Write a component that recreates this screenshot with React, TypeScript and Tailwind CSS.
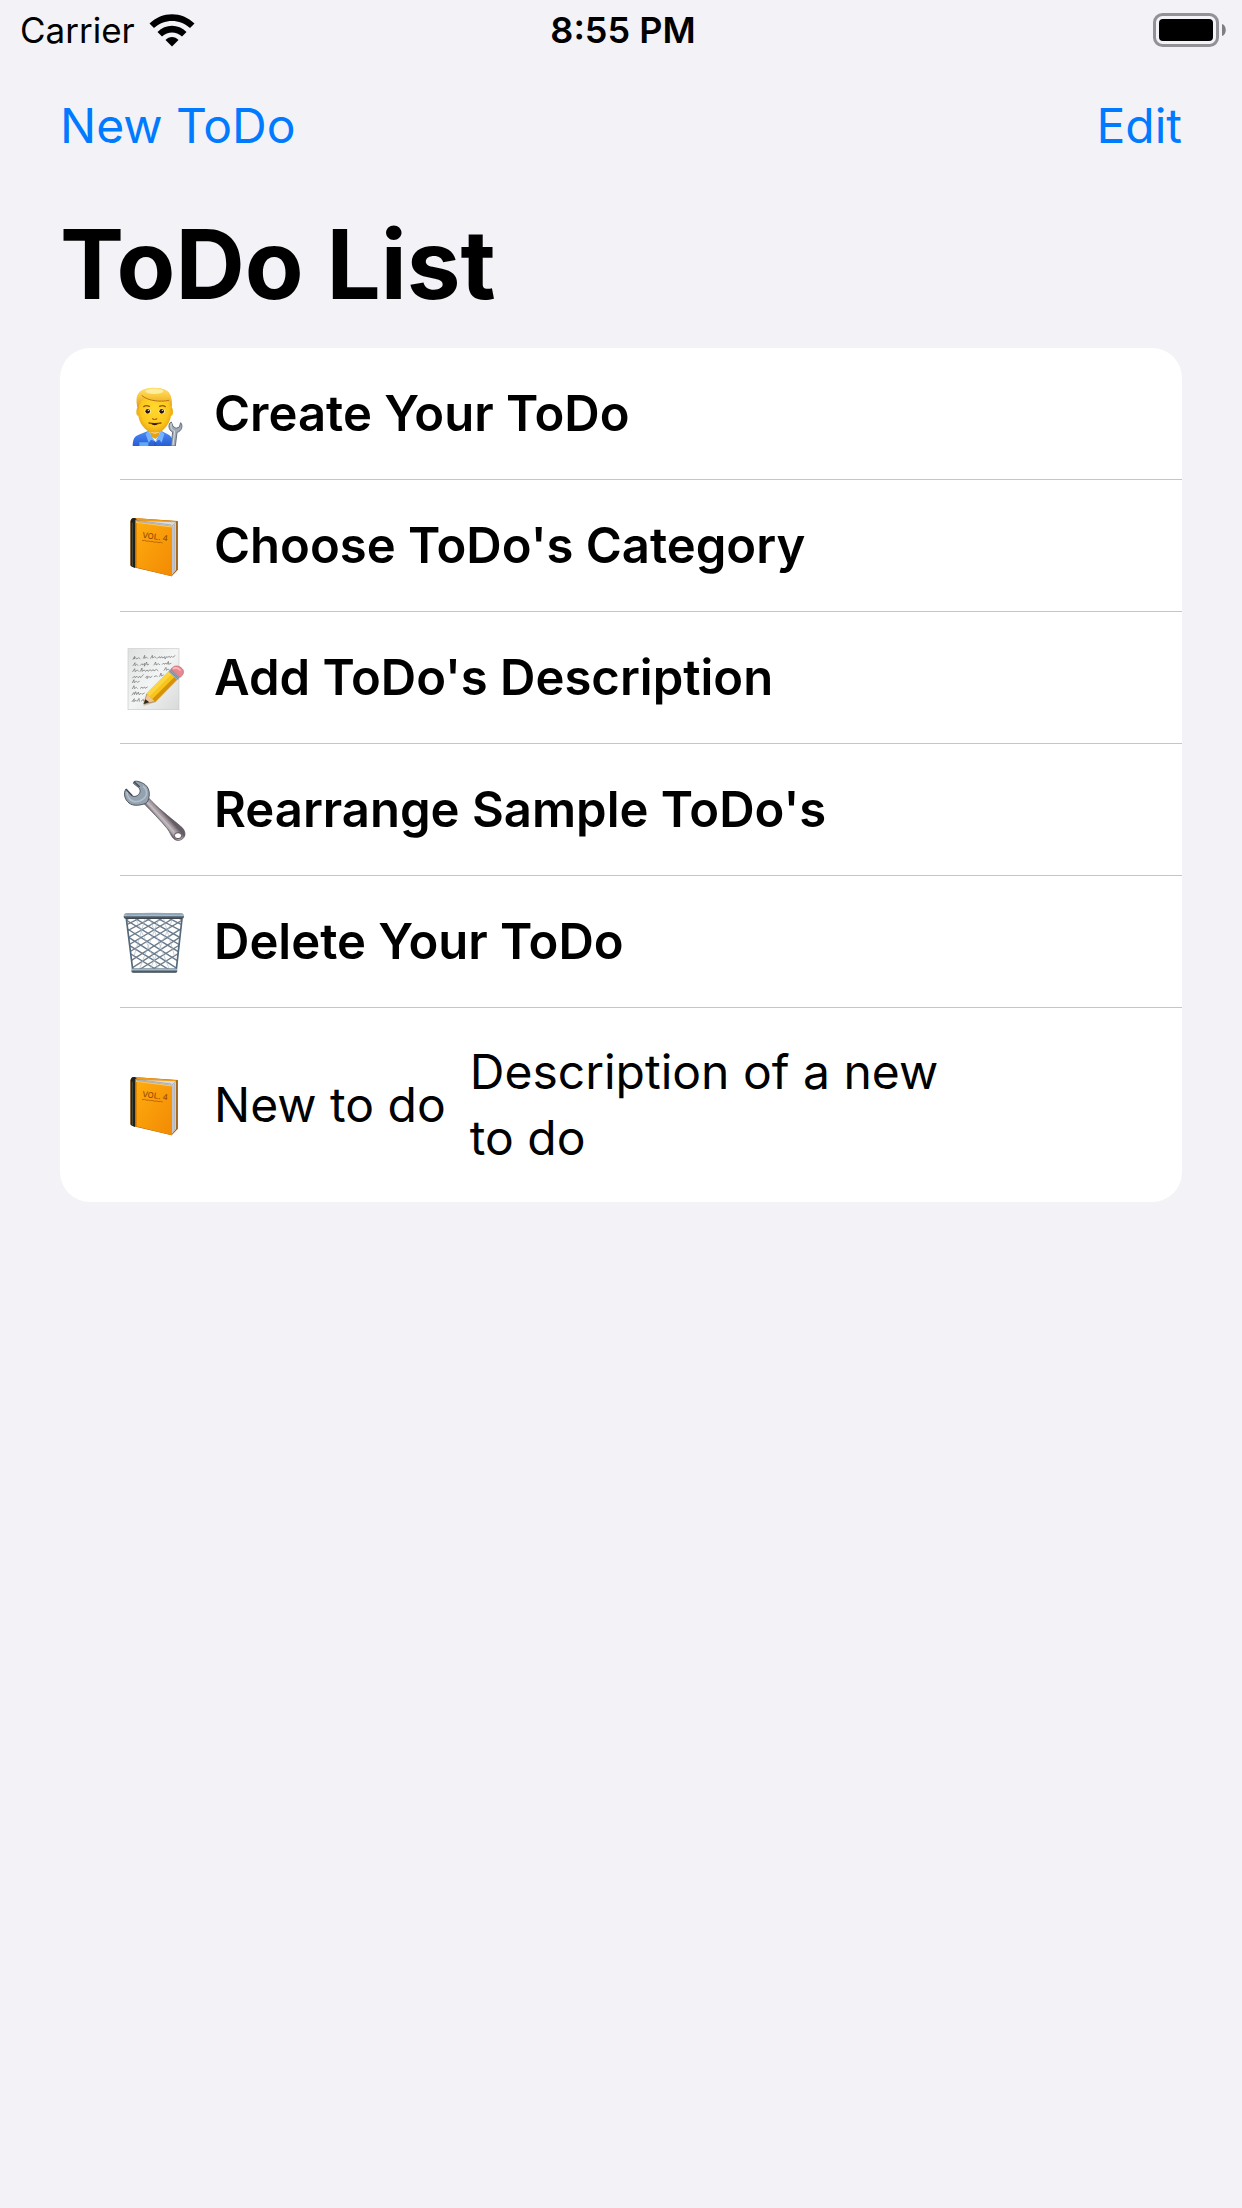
import type { ReactNode } from 'react';

function Mechanic() {
  return (
    <svg viewBox="30 27 210 210" className="size-[70px] shrink-0" role="img" aria-label="Mechanic">
      <defs>
        <linearGradient id="hair" x1="0" y1="0" x2="0" y2="1">
          <stop offset="0" stopColor="#ffdf6e" />
          <stop offset="0.4" stopColor="#f9c83c" />
          <stop offset="1" stopColor="#d98f14" />
        </linearGradient>
        <radialGradient id="face" cx="0.5" cy="0.45" r="0.6">
          <stop offset="0" stopColor="#ffd92e" />
          <stop offset="0.7" stopColor="#fcc71c" />
          <stop offset="1" stopColor="#e49b12" />
        </radialGradient>
        <linearGradient id="shirt" x1="0" y1="0" x2="0" y2="1">
          <stop offset="0" stopColor="#4b8cf5" />
          <stop offset="1" stopColor="#2558cf" />
        </linearGradient>
        <clipPath id="bust">
          <rect x="50" y="40" width="180" height="188" />
        </clipPath>
      </defs>
      <g clipPath="url(#bust)">
        <path d="M68 232c0-22 4-33 18-38l26-10h44l20 10c10 6 14 16 14 38z" fill="url(#shirt)" />
        <path d="M117 184h35l-3 18-12 15-15-15z" fill="#fff" />
        <path d="M119 184c8 9 23 9 31 0l-2 14-12 9-14-9z" fill="#e7a214" />
        <path d="M115 183l20 30-12-4-7 9-9-26z" fill="#75b2ff" />
        <path d="M154 183l-18 30 12-4 7 9 8-26z" fill="#75b2ff" />
        <path d="M135 214v14" stroke="#1b459f" strokeWidth="2" />
        <path d="M88 217h27v11H88z" fill="#5fa8fa" />
        <ellipse cx="84" cy="125" rx="5" ry="12" fill="#eeb01b" />
        <ellipse cx="184" cy="125" rx="5" ry="12" fill="#eeb01b" />
        <path d="M84 92c0-27 18-38 50-38s50 12 50 38v34c0 18-7 37-21 50-8 9-17 12-29 12s-21-4-29-12c-14-14-21-32-21-50z" fill="url(#face)" />
        <path d="M84 120c-8-31-5-48 9-58 17-12 57-12 76 0 17 12 19 31 15 58-1-13-3-25-9-29-25 4-52 2-69-13-3 13-15 15-18 25z" fill="url(#hair)" />
        <path d="M95 76c17 16 54 21 82 15" fill="none" stroke="#b9741a" strokeWidth="3" />
        <ellipse cx="133" cy="64" rx="27" ry="8" fill="#fff5b5" opacity="0.75" />
        <path d="M101 110c5-4 11-4 17-1M149 109c6-3 12-3 17 1" fill="none" stroke="#925410" strokeWidth="4" strokeLinecap="round" />
        <ellipse cx="113" cy="124" rx="9" ry="8" fill="#fff" />
        <ellipse cx="155" cy="124" rx="9" ry="8" fill="#fff" />
        <circle cx="113" cy="124" r="7" fill="#2d1808" />
        <circle cx="155" cy="124" r="7" fill="#2d1808" />
        <circle cx="115" cy="121" r="2" fill="#fff" />
        <circle cx="157" cy="121" r="2" fill="#fff" />
        <path d="M128 146c3 3 9 3 12 0" fill="none" stroke="#b76c09" strokeWidth="4" strokeLinecap="round" />
        <path d="M117 159c8 2 27 2 36 0" fill="none" stroke="#8f4d08" strokeWidth="4" strokeLinecap="round" />
        <path d="M124 160h20c-2 8-18 8-20 0z" fill="#3d1403" />
        <path d="M184 156c-11 5-9 25 4 30l-5 42h13l5-41c14-3 19-20 11-29l-4 13-10 4-9-6z" fill="#a1aab4" stroke="#65717d" strokeWidth="3" />
        <path d="M184 160c-3 13 0 20 10 23l-5 43" fill="none" stroke="#d8dee4" strokeWidth="3" />
      </g>
    </svg>
  );
}

function Book() {
  return (
    <svg viewBox="30 33 210 210" className="size-[70px] shrink-0" role="img" aria-label="Orange book">
      <defs>
        <linearGradient id="cover" x1="0" y1="0" x2="1" y2="1">
          <stop offset="0" stopColor="#ffac0e" />
          <stop offset="1" stopColor="#f28a04" />
        </linearGradient>
      </defs>
      <path d="M68 54l135 9v147l-18 19-118-28-6-6V63z" fill="#a85a05" />
      <path d="M72 54l130 10-14 11-118-15z" fill="#f49a10" />
      <path d="M77 62l121 5-14 15-106-17z" fill="#d9dde0" />
      <path d="M80 64l104 15 14-10M78 61l106 14" fill="none" stroke="#8f959b" strokeWidth="2" />
      <path d="M185 80l14-13v142l-14 17z" fill="#d2d5dc" />
      <path d="M189 80v140M194 74v139" stroke="#9da1aa" strokeWidth="2" />
      <path d="M201 64v146" stroke="#9b5c0d" strokeWidth="4" />
      <path d="M77 66l109 14v149L77 202z" fill="url(#cover)" />
      <path d="M78 67l107 14" stroke="#ffc65a" strokeWidth="3" />
      <path d="M62 64c0-8 5-11 13-10l7 5c-7-2-8 3-7 10v135l-13-6z" fill="#1d211c" />
      <path d="M67 68v130" stroke="#4a5146" strokeWidth="3" />
      <path d="M78 69v132" stroke="#c27105" strokeWidth="3" />
      <text x="96" y="113" fontSize="24" fontWeight="500" fontFamily="Inter, sans-serif" fill="#9a4d05" transform="rotate(8 96 113)">VOL. 4</text>
      <path d="M96 121l6 1 2-1 7 3 4-1 7 2 4-1 8 3 5-1 8 2 4-1 7 2" fill="none" stroke="#bd6a08" strokeWidth="3" />
    </svg>
  );
}

function Memo() {
  return (
    <svg viewBox="30 39 210 210" className="size-[70px] shrink-0" role="img" aria-label="Memo">
      <defs>
        <linearGradient id="paper" x1="0" y1="0" x2="1" y2="1">
          <stop offset="0" stopColor="#dfe1e1" />
          <stop offset="0.5" stopColor="#f3f4f4" />
          <stop offset="1" stopColor="#d8dada" />
        </linearGradient>
      </defs>
      <rect x="54" y="56" width="153" height="183" fill="url(#paper)" stroke="#c9cbca" strokeWidth="2" />
      <g fill="none" stroke="#6b6e6f" strokeWidth="2" strokeLinecap="round" strokeLinejoin="round">
        <path d="M69 88l5-9-2 8 5-4 3 4 6-4 4 3M100 85l4-9v9l5-4 4 4M122 85l5-9 1 8 6-4 5 4M143 84l6-4 1 4 6-4 2 4 7-4 0 7 6-8M173 82l5-3 2 4 5-4 3 3 7-5" />
        <path d="M69 107l6-9 0 9 5-4 4 3M91 106l5-5 2 4 6-5-1 9 7-13 1 9 5-2M132 105l5-9 1 9 7-4 4 3M157 103l4-4 2 4 5-4 3 4 4-9 1 9 7-3" />
        <path d="M68 125l6-9 1 9 7-5 4 4M91 124l5-10 0 10 7-4 3 4 6-4 2 4 7-5 3 4 6-4 2 4 7-5 5 4M162 121l6-9 1 9 5-4 4 3" />
        <path d="M68 143l6-4 1 4 6-4 3 4 6-4 2 4 8-9M107 142l5-4-1 8 6-7 3 4 6-4M133 140l6-3 3 3M149 139l4-10 1 9 6-3" />
        <path d="M67 158l5-9 0 9 7-4 3 3 6-3" />
        <path d="M67 176l5-9 1 9 6-4 3 3M91 175l5-4 2 4 6-4 2 4 6-4" />
        <path d="M66 195l6-8 1 7 4-9 3 9 5-8 2 8 6-4 3 3 7-4" />
        <path d="M66 215l7-9-2 9 7-4 3 3 6-9 1 9M94 213l6-5 1 5" />
      </g>
      <path d="M100 228l11-35 72-73 24 25-70 72z" fill="#80602e" opacity="0.3" />
      <path d="M101 222l10-32 25 24z" fill="#edc693" stroke="#aa7b42" strokeWidth="2" />
      <path d="M101 222l5-14 12 9z" fill="#2d2824" />
      <path d="M110 190l66-66 26 24-66 67-9-8-8-8z" fill="#f7c51d" />
      <path d="M110 190l66-66 9 8-66 67z" fill="#fcd640" />
      <path d="M127 207l67-67 8 8-66 67z" fill="#d99109" />
      <path d="M175 125l8-8 27 25-8 8z" fill="#9faebe" />
      <path d="M178 122l27 25M181 119l26 25" stroke="#667484" strokeWidth="2" />
      <path d="M183 117l7-6c9-7 23-1 29 8 4 8 1 14-8 23z" fill="#e8878d" stroke="#bd646d" strokeWidth="2" />
      <path d="M190 116c7-5 15-1 20 4" fill="none" stroke="#ffb9bd" strokeWidth="5" strokeLinecap="round" />
    </svg>
  );
}

function Wrench() {
  return (
    <svg viewBox="30 30 210 210" className="size-[70px] shrink-0" role="img" aria-label="Wrench">
      <defs>
        <linearGradient id="steel" gradientUnits="userSpaceOnUse" x1="150" y1="128" x2="128" y2="147">
          <stop offset="0" stopColor="#655d66" />
          <stop offset="0.35" stopColor="#a69ba1" />
          <stop offset="0.7" stopColor="#b6afb5" />
          <stop offset="1" stopColor="#625b63" />
        </linearGradient>
      </defs>
      <path d="M103 117L117 100c24 27 59 54 94 83 9 7 15 16 14 26-2 13-18 22-30 15-12-7-13-21-24-34-21-26-46-50-68-73z" fill="url(#steel)" stroke="#554f57" strokeWidth="2" />
      <path d="M112 111c27 31 59 61 81 91" fill="none" stroke="#d4c9cb" strokeWidth="4" opacity="0.6" />
      <path d="M48 72c-9 12-4 32 9 42 12 9 28 8 45 3 8-2 13-8 14-17 5-18 0-35-15-44-9-5-20-9-28-7l-3 6 15 12c7 6 7 15 1 21-6 7-15 9-23 2z" fill="#94a2b0" stroke="#4d5762" strokeWidth="3" strokeLinejoin="round" />
      <path d="M51 80c0 13 7 26 19 29 13 4 31-4 37-15 5-10 2-23-8-31" fill="none" stroke="#b3bfc9" strokeWidth="5" />
      <path d="M48 72l19 20M72 50l17 15" stroke="#424a52" strokeWidth="4" />
      <ellipse cx="204" cy="212" rx="11" ry="9" fill="#fff" stroke="#5b4e54" strokeWidth="3" />
    </svg>
  );
}

function Wastebasket() {
  return (
    <svg viewBox="30 36 210 210" className="size-[70px] shrink-0" role="img" aria-label="Wastebasket">
      <defs>
        <clipPath id="basket">
          <path d="M49 68h167l-17 158H67z" />
        </clipPath>
        <linearGradient id="rim" x1="0" y1="0" x2="0" y2="1">
          <stop offset="0" stopColor="#6f8496" />
          <stop offset="0.35" stopColor="#b2c7d7" />
          <stop offset="0.6" stopColor="#596671" />
          <stop offset="1" stopColor="#36404a" />
        </linearGradient>
      </defs>
      <g clipPath="url(#basket)" fill="none">
        <path d="M20 58l205 124M20 81l190 121M20 104l190 122M20 128l180 110M20 151l150 92M48 54l175 104M80 54l145 82M112 54l110 58M144 54l90 44M176 54l60 30" stroke="#657b90" strokeWidth="4" />
        <path d="M245 58L40 182M245 81L55 202M245 104L55 226M245 128L65 238M245 151L95 243M217 54L42 158M185 54L40 136M153 54L43 112M121 54L31 98M89 54L29 84" stroke="#747d85" strokeWidth="4" />
        <path d="M76 68l70 155M118 68l60 155M160 68l35 120M190 68l-70 155M148 68L88 223M106 68L73 180" stroke="#a9bac8" strokeWidth="2" />
      </g>
      <path d="M49 71l19 152M216 71l-17 152" stroke="#54697c" strokeWidth="5" />
      <rect x="64" y="220" width="138" height="13" rx="5" fill="url(#rim)" />
      <rect x="41" y="55" width="181" height="17" rx="8" fill="url(#rim)" />
      <path d="M52 59c46-4 112-4 158 0" fill="none" stroke="#8ca7bc" strokeWidth="5" />
    </svg>
  );
}

function Wifi() {
  return (
    <svg viewBox="0 0 46 33" className="h-[33px] w-[46px]" role="img" aria-label="Wi-Fi">
      <path d="M0.500 9.500C13-3 33-3 45.500 9.500L41 14C31 4.500 15 4.500 5 14z" />
      <path d="M8.500 18C16.500 9.500 29.500 9.500 37.500 18L33 22.500C27 17 19 17 13 22.500z" />
      <path d="M16.500 26C20 22 26 22 29.500 26L23 32.500z" />
    </svg>
  );
}

function Battery() {
  return (
    <svg viewBox="0 0 73 34" className="h-[34px] w-[73px]" role="img" aria-label="Battery full">
      <rect x="1.500" y="1.500" width="63" height="31" rx="8" fill="none" stroke="#929195" strokeWidth="3" />
      <rect x="6" y="6" width="54" height="22" rx="4" />
      <path d="M69 11c5 1 5 11 0 12z" fill="#7f7e82" />
    </svg>
  );
}

function Row({ icon, title }: { icon: ReactNode; title: string }) {
  return (
    <li className="ml-[60px] flex min-h-[132px] items-center gap-6 border-b border-[#c6c6c8]">
      {icon}
      <span className="text-[49px] font-semibold">{title}</span>
    </li>
  );
}

export default function App() {
  return (
    <div className="min-h-screen bg-[#f2f2f7] font-['Inter',sans-serif] text-black">
      <header className="grid h-[60px] grid-cols-3 items-center pl-5 pr-4 text-[35px] leading-10">
        <div className="flex items-center gap-[14px]">
          <span>Carrier</span>
          <Wifi />
        </div>
        <time className="text-center text-[36px] font-semibold">8:55 PM</time>
        <div className="flex justify-end">
          <Battery />
        </div>
      </header>
      <nav className="flex h-[132px] items-center justify-between px-[60px] text-[48px] leading-[66px] text-[#007aff]">
        <button type="button">New ToDo</button>
        <button type="button">Edit</button>
      </nav>
      <main className="px-[60px]">
        <h1 className="pb-6 pt-3 text-[96px] font-bold leading-[120px]">ToDo List</h1>
        <ul className="overflow-hidden rounded-[30px] bg-white text-[48px] leading-[66px]">
          <Row icon={<Mechanic />} title="Create Your ToDo" />
          <Row icon={<Book />} title="Choose ToDo's Category" />
          <Row icon={<Memo />} title="Add ToDo's Description" />
          <Row icon={<Wrench />} title="Rearrange Sample ToDo's" />
          <Row icon={<Wastebasket />} title="Delete Your ToDo" />
          <li className="ml-[60px] flex items-center gap-6 py-[31px]">
            <Book />
            <span className="shrink-0">New to do</span>
            <p className="max-w-[520px]">Description of a new to do</p>
          </li>
        </ul>
      </main>
    </div>
  );
}
